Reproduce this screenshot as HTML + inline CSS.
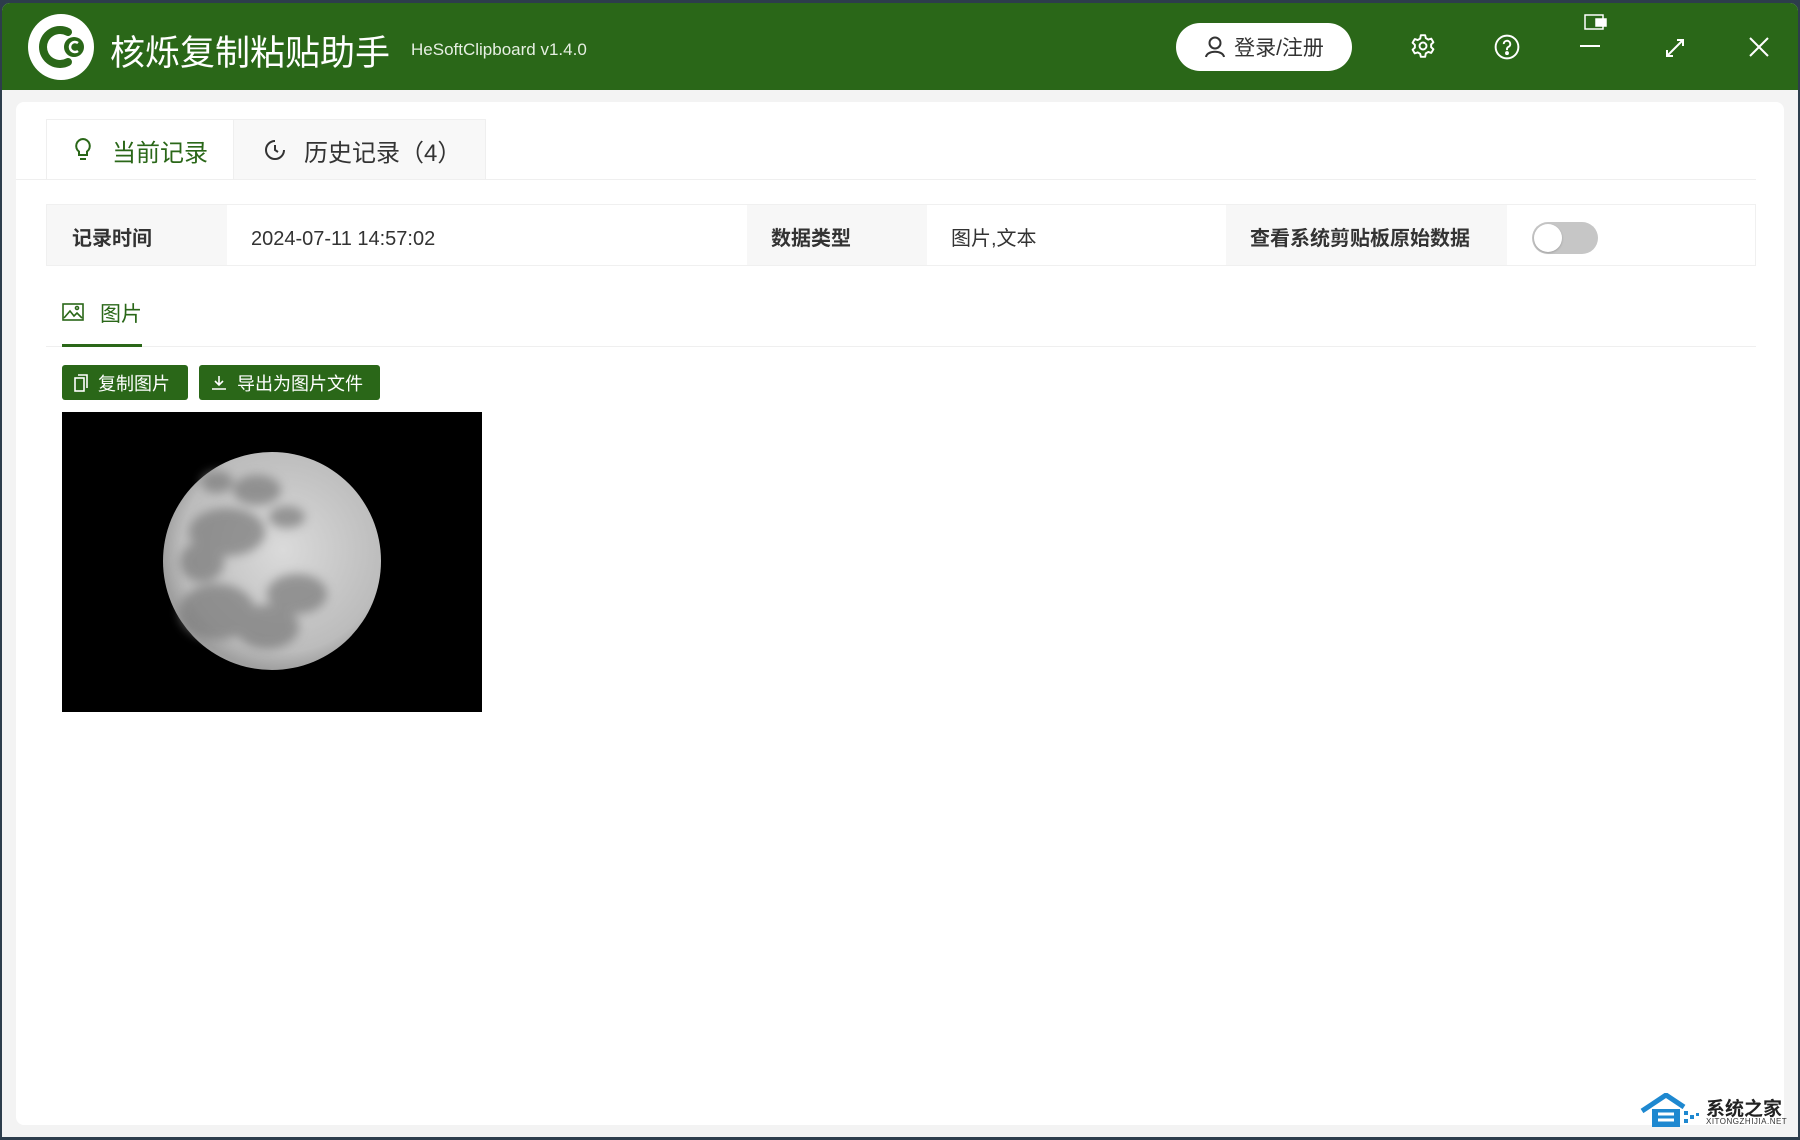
<!DOCTYPE html>
<html><head><meta charset="utf-8"><style>
*{margin:0;padding:0;box-sizing:border-box}
html,body{width:1800px;height:1140px;overflow:hidden}
body{background:#2d3d4c;font-family:"Liberation Sans","Noto Sans CJK SC",sans-serif;position:relative}
.win{position:absolute;left:2px;top:3px;width:1796px;height:1134px;background:#f3f3f3;border-radius:8px 8px 0 0;overflow:hidden}
.hdr{position:absolute;left:0;top:0;width:100%;height:87px;background:#2a6718}
.abs{position:absolute}
.card{position:absolute;left:14px;top:99px;width:1768px;height:1023px;background:#fff;border-radius:8px}
.t{color:#333;font-size:20px;white-space:nowrap;top:106px;height:62px;line-height:62px}
.btn{position:absolute;height:35px;background:#2a6718;border-radius:3px;color:#fff;font-size:18px;display:flex;align-items:center}
</style></head><body>
<div class="win">
 <div class="hdr">
  <svg class="abs" style="left:24px;top:9px" width="70" height="70" viewBox="0 0 70 70">
   <circle cx="35" cy="35" r="33" fill="#fff"/>
   <path d="M42 20 A17 17 0 1 0 42 50" fill="none" stroke="#2a6718" stroke-width="8" stroke-linecap="round"/>
   <circle cx="48" cy="35" r="10" fill="#2a6718"/>
   <path d="M52 31 A5 5 0 1 0 52 39" fill="none" stroke="#fff" stroke-width="2.5"/>
  </svg>
  <div class="abs" style="left:108px;top:22px;color:#fff;font-size:35px">核烁复制粘贴助手</div>
  <div class="abs" style="left:409px;top:37px;color:#e6efe2;font-size:17px">HeSoftClipboard v1.4.0</div>
  <div class="abs" style="left:1174px;top:20px;width:176px;height:48px;background:#fff;border-radius:24px;display:flex;align-items:center;justify-content:center;font-size:21px;color:#333">
   <svg width="22" height="24" viewBox="0 0 22 24" style="margin-right:8px"><circle cx="11" cy="8" r="5.5" fill="none" stroke="#333" stroke-width="2"/><path d="M2 22 C3 15 19 15 20 22" fill="none" stroke="#333" stroke-width="2"/></svg>登录/注册</div>
  <svg class="abs" style="left:1408px;top:30px" width="26" height="26" viewBox="0 0 24 24" fill="none" stroke="#fff" stroke-width="1.8"><circle cx="12" cy="12" r="3.2"/><path d="M10 2h4l.6 2.8 2.3 1.3 2.7-.9 2 3.4-2.1 1.9v2.6l2.1 1.9-2 3.4-2.7-.9-2.3 1.3L14 22h-4l-.6-2.8-2.3-1.3-2.7.9-2-3.4 2.1-1.9v-2.6L2.4 9l2-3.4 2.7.9 2.3-1.3z" stroke-linejoin="round"/></svg>
  <svg class="abs" style="left:1492px;top:31px" width="26" height="26" viewBox="0 0 24 24" fill="none" stroke="#fff" stroke-width="1.8"><circle cx="12" cy="12" r="10.5"/><path d="M9 9.3a3 3 0 1 1 4.2 2.7c-.8.4-1.2 1-1.2 1.9v1"/><circle cx="12" cy="17.6" r=".9" fill="#fff"/></svg>
  <svg class="abs" style="left:1582px;top:10px" width="26" height="20" viewBox="0 0 26 20" fill="none" stroke="#fff" stroke-width="1.5"><rect x="1" y="2" width="18" height="14"/><rect x="12" y="6" width="10" height="7" fill="#fff"/></svg>
  <div class="abs" style="left:1578px;top:42px;width:20px;height:2px;background:#fff"></div>
  <svg class="abs" style="left:1662px;top:34px" width="22" height="22" viewBox="0 0 22 22" fill="none" stroke="#fff" stroke-width="2"><path d="M3 19L19 3M13 3h6v6M3 13v6h6"/></svg>
  <svg class="abs" style="left:1747px;top:34px" width="20" height="20" viewBox="0 0 20 20" stroke="#fff" stroke-width="2"><path d="M1 1L19 19M19 1L1 19"/></svg>
 </div>
 <div class="card">
  <div class="abs" style="left:30px;top:17px;width:188px;height:61px;background:#fff;border:1px solid #efefef;border-bottom:none"></div>
  <div class="abs" style="left:217px;top:17px;width:253px;height:60px;background:#f8f8f8;border:1px solid #efefef;border-bottom:none"></div>
  <div class="abs" style="left:0;top:77px;width:1740px;height:1px;background:#efefef"></div>
  <svg class="abs" style="left:56px;top:35px" width="22" height="26" viewBox="0 0 22 26" fill="none" stroke="#2a6718" stroke-width="2"><path d="M11 2a7 7 0 0 0-4 12.6V18h8v-3.4A7 7 0 0 0 11 2z"/><path d="M8 22h6"/></svg>
  <div class="abs" style="left:96px;top:31px;color:#2a6718;font-size:24px">当前记录</div>
  <svg class="abs" style="left:247px;top:36px" width="24" height="24" viewBox="0 0 24 24" fill="none" stroke="#333" stroke-width="2"><path d="M21 12A9 9 0 1 1 12 3"/><path d="M12 7v5l3 2"/></svg>
  <div class="abs" style="left:288px;top:31px;color:#333;font-size:24px">历史记录（4）</div>
  <div class="abs" style="left:30px;top:102px;width:1710px;height:62px;border:1px solid #f0f0f0"></div>
  <div class="abs" style="left:31px;top:103px;width:180px;height:60px;background:#f7f7f7"></div>
  <div class="abs" style="left:731px;top:103px;width:180px;height:60px;background:#f7f7f7"></div>
  <div class="abs" style="left:1210px;top:103px;width:281px;height:60px;background:#f7f7f7"></div>
  <div class="abs t" style="left:56px;font-weight:bold">记录时间</div>
  <div class="abs t" style="left:235px">2024-07-11 14:57:02</div>
  <div class="abs t" style="left:755px;font-weight:bold">数据类型</div>
  <div class="abs t" style="left:935px">图片,文本</div>
  <div class="abs t" style="left:1234px;font-weight:bold">查看系统剪贴板原始数据</div>
  <div class="abs" style="left:1516px;top:120px;width:66px;height:32px;background:#c6c6c6;border-radius:16px"></div>
  <div class="abs" style="left:1518px;top:122px;width:28px;height:28px;background:#fff;border-radius:50%;box-shadow:0 1px 2px rgba(0,0,0,.2)"></div>
  <svg class="abs" style="left:46px;top:201px" width="22" height="18" viewBox="0 0 22 18" fill="none" stroke="#2a6718" stroke-width="1.6"><rect x="1" y="1" width="20" height="16"/><path d="M2 15l6-7 4 5 3-3 5 5"/><circle cx="15" cy="5" r="1.5"/></svg>
  <div class="abs" style="left:84px;top:196px;color:#2a6718;font-size:21px">图片</div>
  <div class="abs" style="left:30px;top:244px;width:1710px;height:1px;background:#efefef"></div>
  <div class="abs" style="left:46px;top:242px;width:80px;height:3px;background:#2a6718"></div>
  <div class="btn" style="left:46px;width:126px;top:263px"><svg style="margin:0 10px 0 12px" width="14" height="18" viewBox="0 0 14 18" fill="none" stroke="#fff" stroke-width="1.6"><rect x="1" y="4" width="9" height="13"/><path d="M4 1h9v13"/></svg>复制图片</div>
  <div class="btn" style="left:183px;width:181px;top:263px"><svg style="margin:0 10px 0 12px" width="16" height="16" viewBox="0 0 16 16" fill="none" stroke="#fff" stroke-width="1.6"><path d="M8 1v9M4 6l4 4 4-4M1 14h14"/></svg>导出为图片文件</div>
  <svg class="abs" style="left:46px;top:310px" width="420" height="300" viewBox="0 0 420 300">
   <defs><radialGradient id="mg" cx="55%" cy="45%" r="55%"><stop offset="0" stop-color="#dadada"/><stop offset=".85" stop-color="#bcbcbc"/><stop offset="1" stop-color="#a0a0a0"/></radialGradient>
   <filter id="bl"><feGaussianBlur stdDeviation="5"/></filter></defs>
   <rect width="420" height="300" fill="#000"/>
   <circle cx="210" cy="149" r="109" fill="url(#mg)"/>
   <g fill="#7a7a7a" opacity=".7" filter="url(#bl)">
    <ellipse cx="155" cy="70" rx="16" ry="11"/>
    <ellipse cx="195" cy="78" rx="24" ry="15"/>
    <ellipse cx="165" cy="120" rx="38" ry="24"/>
    <ellipse cx="140" cy="150" rx="22" ry="20"/>
    <ellipse cx="155" cy="200" rx="38" ry="28"/>
    <ellipse cx="205" cy="215" rx="32" ry="22"/>
    <ellipse cx="235" cy="182" rx="30" ry="20"/>
    <ellipse cx="225" cy="105" rx="18" ry="11"/>
   </g>
  </svg>
 </div>
 <svg class="abs" style="left:1638px;top:1090px" width="62" height="36" viewBox="0 0 62 36"><path d="M2 18L26 2 44 14" fill="none" stroke="#1e88d0" stroke-width="5"/><rect x="12" y="16" width="28" height="18" fill="#1e88d0"/><path d="M18 21h16M18 27h16" stroke="#fff" stroke-width="3"/><g fill="#1e88d0"><rect x="44" y="18" width="4" height="4"/><rect x="50" y="22" width="4" height="4"/><rect x="44" y="26" width="4" height="4"/><rect x="56" y="20" width="3" height="3"/></g></svg>
 <div class="abs" style="left:1704px;top:1091px;font-size:19px;font-weight:bold;color:#222">系统之家</div>
 <div class="abs" style="left:1704px;top:1114px;font-size:8px;color:#333;letter-spacing:.5px">XITONGZHIJIA.NET</div>
</div>
</body></html>
